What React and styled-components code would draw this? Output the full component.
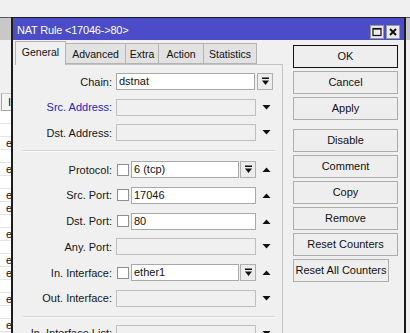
import React from "react";
import styled, { createGlobalStyle } from "styled-components";

const GlobalStyle = createGlobalStyle`
  html, body { margin: 0; padding: 0; background: #f0f0f0; }
  body { font-family: "Liberation Sans", Arial, sans-serif; font-size: 11px; color: #111; }
`;

const Desktop = styled.div`
  position: relative;
  width: 410px;
  height: 333px;
  overflow: hidden;
  background: #f0f0f0;
`;

/* window behind the dialog */
const BackWindow = styled.div`
  position: absolute;
  left: 0;
  right: 0;
  top: 17px;
  bottom: 0;
  border-top: 1px solid #5a5a5a;
  display: flex;
  flex-direction: column;
`;

const BackTitle = styled.div`
  height: 22px;
  background: #c8c8c8;
`;

const BackBody = styled.div`
  flex: 1;
  padding-top: 53px;
  background: #f0f0f0;
`;

const BackColumn = styled.div`
  width: 12px;
  overflow: hidden;
`;

const BackHeader = styled.div`
  height: 16px;
  line-height: 16px;
  padding-left: 6px;
  border-top: 1px solid #c8c8c8;
  border-bottom: 1px solid #a8a8a8;
  border-left: 1px solid #a8a8a8;
  margin-left: 1px;
  background: #f4f4f4;
  white-space: nowrap;
`;

const BackRow = styled.div`
  height: 12px;
  line-height: 12px;
  padding-left: 6px;
  background: #fff;
  border-bottom: 1px solid #e4e4e4;
  white-space: nowrap;
`;

/* dialog */
const Dialog = styled.div`
  position: absolute;
  left: 11px;
  top: 17px;
  width: 391px;
  bottom: -30px;
  background: #f0f0f0;
  border: 2px solid #1c1c1c;
  border-top: 1px solid #1c1c1c;
  display: flex;
  flex-direction: column;
`;

const TitleBar = styled.div`
  height: 22px;
  box-sizing: border-box;
  background: #4c4cc8;
  display: flex;
  align-items: flex-end;
  padding: 0 4px 1px 4px;
`;

const TitleText = styled.div`
  flex: 1;
  align-self: center;
  padding-top: 3px;
  color: #fff;
  font-size: 11px;
  letter-spacing: -0.2px;
  white-space: nowrap;
`;

const TitleButtons = styled.div`
  display: flex;
  gap: 2px;
`;

const TitleButton = styled.div`
  width: 14px;
  height: 14px;
  box-sizing: border-box;
  background: #ececec;
  border: 1px solid #9a9a9a;
  display: flex;
  align-items: center;
  justify-content: center;
`;

const Body = styled.div`
  display: flex;
  flex: 1;
`;

const LeftPane = styled.div`
  width: 268px;
  padding-left: 2px;
  display: flex;
  flex-direction: column;
`;

const TabBar = styled.div`
  height: 24px;
  display: flex;
  align-items: flex-end;
`;

const Tab = styled.div`
  width: ${(p) => p.$w}px;
  height: ${(p) => (p.$active ? 24 : 21)}px;
  box-sizing: border-box;
  margin-bottom: ${(p) => (p.$active ? -1 : 0)}px;
  position: relative;
  z-index: ${(p) => (p.$active ? 1 : 0)};
  background: ${(p) => (p.$active ? "#f0f0f0" : "#e2e2e2")};
  border: 1px solid #b4b4b4;
  border-bottom: ${(p) => (p.$active ? "none" : "1px solid #b4b4b4")};
  border-left: ${(p) => (p.$first || p.$active ? "1px solid #b4b4b4" : "none")};
  font-size: 10.5px;
  text-align: center;
  padding-top: 4px;
  white-space: nowrap;
`;

const Panel = styled.div`
  flex: 1;
  border-top: 1px solid #c4c4c4;
  border-right: 1px solid #c4c4c4;
  padding-top: 8px;
  display: flex;
  flex-direction: column;
`;

const Group = styled.div`
  display: flex;
  flex-direction: column;
  gap: ${(p) => p.$gap}px;
`;

const Separator = styled.div`
  height: 1px;
  background: #d6d6d6;
  border-bottom: 1px solid #fafafa;
  margin: ${(p) => p.$top}px 7px ${(p) => p.$bottom}px 8px;
`;

const FormRow = styled.div`
  display: flex;
  align-items: center;
  height: 17px;
`;

const Label = styled.div`
  width: 97px;
  margin-right: 4px;
  text-align: right;
  white-space: nowrap;
  color: ${(p) => (p.$blue ? "#2424c4" : "#161616")};
`;

const Fields = styled.div`
  width: 160px;
  height: 17px;
  display: flex;
  align-items: center;
`;

const Input = styled.div`
  flex: 1;
  height: 17px;
  box-sizing: border-box;
  border: 1px solid ${(p) => (p.$disabled ? "#bfbfbf" : "#a9a9a9")};
  background: ${(p) => (p.$disabled ? "#f0f0f0" : "#fff")};
  padding-left: 2px;
  line-height: 15px;
  white-space: nowrap;
  overflow: hidden;
`;

const Check = styled.div`
  width: 12px;
  height: 12px;
  box-sizing: border-box;
  margin: 0 2px 0 1px;
  border: 1px solid #8f8f8f;
  background: #fff;
`;

const DropButton = styled.div`
  width: 16px;
  height: 17px;
  box-sizing: border-box;
  margin-left: ${(p) => p.$ml}px;
  margin-right: ${(p) => p.$mr}px;
  border: 1px solid #b0b0b0;
  background: #ededed;
  display: flex;
  align-items: center;
  justify-content: center;
`;

const ArrowSlot = styled.div`
  width: 20px;
  display: flex;
  align-items: center;
  justify-content: center;
`;

const RightPane = styled.div`
  flex: 1;
  padding: 5px 0 0 10px;
  display: flex;
  flex-direction: column;
  gap: 3px;
`;

const Button = styled.div`
  width: ${(p) => p.$w || 105}px;
  height: 23px;
  box-sizing: border-box;
  margin-top: ${(p) => p.$mt || 0}px;
  border: 1px solid ${(p) => (p.$default ? "#111" : "#adadad")};
  background: #eeeeee;
  text-align: center;
  line-height: 21px;
  white-space: nowrap;
`;

const DropIcon = () => (
  <svg width="9" height="9" viewBox="0 0 9 9">
    <rect x="1" y="0.5" width="7" height="1.5" fill="#111" />
    <polygon points="1,3.5 8,3.5 4.5,8" fill="#111" />
  </svg>
);

const Arrow = ({ up }) => (
  <svg width="9" height="5" viewBox="0 0 9 5">
    <polygon points={up ? "0.5,5 8.5,5 4.5,0.5" : "0.5,0 8.5,0 4.5,4.5"} fill="#111" />
  </svg>
);

const tabs = [
  { name: "General", w: 51 },
  { name: "Advanced", w: 60 },
  { name: "Extra", w: 33 },
  { name: "Action", w: 45 },
  { name: "Statistics", w: 53 },
];

const backRows = ["", "", "e", "", "e", "", "e", "e", "", "e", "", "e", "e", "", "e", "", "e"];

const buttons = [
  { label: "OK", def: true },
  { label: "Cancel" },
  { label: "Apply" },
  { label: "Disable", mt: 6 },
  { label: "Comment" },
  { label: "Copy" },
  { label: "Remove" },
  { label: "Reset Counters" },
  { label: "Reset All Counters", w: 96 },
];

function Row({ label, blue, value, disabled, check, drop, arrow }) {
  return (
    <FormRow>
      <Label $blue={blue}>{label}</Label>
      <Fields>
        {check && <Check />}
        <Input $disabled={disabled}>{value}</Input>
        {drop && (
          <DropButton $ml={arrow ? 1 : 2} $mr={arrow ? 0 : 3}>
            <DropIcon />
          </DropButton>
        )}
        {arrow && (
          <ArrowSlot>
            <Arrow up={arrow === "up"} />
          </ArrowSlot>
        )}
      </Fields>
    </FormRow>
  );
}

export default function App() {
  return (
    <Desktop>
      <GlobalStyle />
      <BackWindow>
        <BackTitle />
        <BackBody>
          <BackColumn>
            <BackHeader>I</BackHeader>
            {backRows.map((r, i) => (
              <BackRow key={i}>{r}</BackRow>
            ))}
          </BackColumn>
        </BackBody>
      </BackWindow>

      <Dialog>
        <TitleBar>
          <TitleText>NAT Rule &lt;17046-&gt;80&gt;</TitleText>
          <TitleButtons>
            <TitleButton>
              <svg width="10" height="10" viewBox="0 0 10 10">
                <rect x="1" y="1.5" width="8" height="7" fill="none" stroke="#111" strokeWidth="1.2" />
                <rect x="1" y="1" width="8" height="1.6" fill="#111" />
              </svg>
            </TitleButton>
            <TitleButton>
              <svg width="10" height="10" viewBox="0 0 10 10">
                <path d="M2 2 L8 8 M8 2 L2 8" stroke="#111" strokeWidth="2" />
              </svg>
            </TitleButton>
          </TitleButtons>
        </TitleBar>

        <Body>
          <LeftPane>
            <TabBar>
              {tabs.map((t, i) => (
                <Tab key={t.name} $w={t.w} $active={i === 0} $first={i === 0}>
                  {t.name}
                </Tab>
              ))}
            </TabBar>
            <Panel>
              <Group $gap={8.5}>
                <Row label="Chain:" value="dstnat" drop />
                <Row label="Src. Address:" blue disabled arrow="down" />
                <Row label="Dst. Address:" disabled arrow="down" />
              </Group>
              <Separator $top={9} $bottom={9} />
              <Group $gap={8.8}>
                <Row label="Protocol:" check value="6 (tcp)" drop arrow="up" />
                <Row label="Src. Port:" check value="17046" arrow="up" />
                <Row label="Dst. Port:" check value="80" arrow="up" />
                <Row label="Any. Port:" disabled arrow="down" />
                <Row label="In. Interface:" check value="ether1" drop arrow="up" />
                <Row label="Out. Interface:" disabled arrow="down" />
              </Group>
              <Separator $top={9} $bottom={7} />
              <Group $gap={8.8}>
                <Row label="In. Interface List:" disabled arrow="down" />
              </Group>
            </Panel>
          </LeftPane>

          <RightPane>
            {buttons.map((b) => (
              <Button key={b.label} $default={b.def} $mt={b.mt} $w={b.w}>
                {b.label}
              </Button>
            ))}
          </RightPane>
        </Body>
      </Dialog>
    </Desktop>
  );
}
